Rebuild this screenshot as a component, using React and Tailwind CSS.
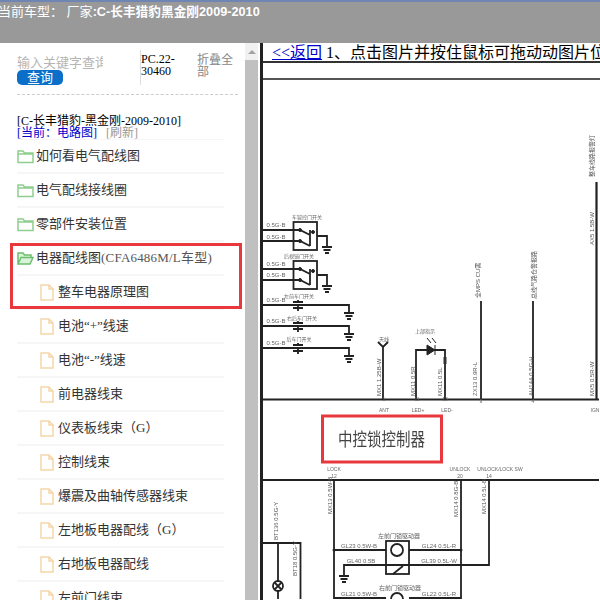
import React from 'react';

const folders = ['如何看电气配线图', '电气配线接线圈', '零部件安装位置'];
const files = ['电池“+”线速', '电池“-”线速', '前电器线束', '仪表板线束（G）', '控制线束', '爆震及曲轴传感器线束', '左地板电器配线（G）', '右地板电器配线', '左前门线束'];

const FolderIcon = ({ open }) => (
  <svg width="17" height="15" viewBox="0 0 17 15" fill="none" stroke="#8fce8f" strokeWidth="1.5" className="shrink-0">
    {open ? (
      <path d="M1 13V2h5l1.500 2H14v2.500M1 13l3-6.500h12L13 13z" fill="#d9f2d9" stroke="#6cbf6c" />
    ) : (
      <path d="M1 13.500V2h5l1.500 2H16v9.500zM1 5h15" />
    )}
  </svg>
);

const FileIcon = () => (
  <svg width="14" height="17" viewBox="0 0 14 17" fill="none" stroke="#f5d6a8" strokeWidth="1.5" className="shrink-0">
    <path d="M1 1h8l4 4v11H1zM9 1v4h4" />
  </svg>
);

const Row = ({ children }) => (
  <div className="flex h-[34px] w-[207px] items-center border-b-2 border-[#f6f6f6] text-[13px] whitespace-nowrap text-[#333]">
    {children}
  </div>
);

const Ground = ({ x, y }) => (
  <path
    d={`M${x} ${y}v5M${x - 5} ${y + 5}h10M${x - 3.5} ${y + 8}h7M${x - 2} ${y + 11}h4`}
    stroke="#222"
    strokeWidth="1.8"
    fill="none"
  />
);

const Switch = ({ y }) => (
  <g fill="none" stroke="#222">
    <rect x="294.500" y={y} width="23.500" height="28" strokeWidth="1.800" />
    <path d={`M264 ${y + 8}h37l10 5M264 ${y + 19}h37l10 5M311 ${y + 8}v16M318 ${y + 14}h10v6`} strokeWidth="1.800" />
    <circle cx="301" cy={y + 8} r="1.500" fill="#222" />
    <circle cx="301" cy={y + 19} r="1.500" fill="#222" />
    <circle cx="314" cy={y + 10} r="1.500" fill="#222" />
  </g>
);

const Cap = ({ y }) => (
  <path
    d={`M264 ${y}h86v3M294 ${y - 3}h10M294 ${y + 3}h10M299 ${y - 5}v3M299 ${y}v6`}
    stroke="#222"
    strokeWidth="1.800"
    fill="none"
  />
);

const Label = ({ x, y, children, size = 6, fill = '#666' }) => (
  <text x={x} y={y} fontSize={size} fill={fill} textAnchor="middle">{children}</text>
);

const VLabel = ({ x, y, children, size = 6 }) => (
  <text x={x} y={y} fontSize={size} fill="#555" transform={`rotate(-90 ${x} ${y})`}>{children}</text>
);

const Diagram = () => (
  <svg viewBox="264 81 336 519" className="block h-[519px] w-[336px] shrink-0 blur-[0.4px]" style={{ fontFamily: '"Liberation Sans", "Noto Sans CJK SC", sans-serif' }}>
    <Switch y={223} />
    <Switch y={262} />
    <Ground x={328} y={243} />
    <Ground x={328} y={282} />
    <Cap y={306} />
    <Cap y={327} />
    <Cap y={349} />
    <Ground x={350} y={309} />
    <Ground x={350} y={330} />
    <Ground x={350} y={352} />

    <g stroke="#222" strokeWidth="1.800" fill="none">
      <path d="M264 400.500H600M264 481H600" strokeWidth="2.200" />
      <path d="M384 348V400M379 343l5 5 5-5" />
      <path d="M417 400V351H446V400M482 302V400M534 302V400" />
      <path d="M597.500 183V400" strokeWidth="2.200" />
      <path d="M335 481V600M462 481V600M490 481V566H345V572" />
      <path d="M335 551H387M410 551H462M335 599H387M410 599H462" />
      <rect x="387" y="542" width="23" height="33" />
      <circle cx="398" cy="551" r="6" />
      <circle cx="398" cy="600" r="6" />
      <path d="M264 544H301.500V600M279 544V600" />
      <circle cx="279" cy="587" r="5" fill="#fff" />
      <path d="M275.500 583.500l7 7M282.500 583.500l-7 7" />
      <path d="M394 575l10-8M394 566h6" />
    </g>
    <path d="M428 346l8 5-8 5zM436 346v10" fill="#222" stroke="#222" />
    <path d="M428 339l4 5M433 339l4 5" stroke="#222" />
    <rect x="444.500" y="358" width="3" height="7" fill="#333" />
    <Ground x={345} y={572} />
    <circle cx="335" cy="551" r="1.500" fill="#222" />
    <circle cx="462" cy="551" r="1.500" fill="#222" />

    {[228, 240, 267, 278, 303, 324, 346].map((y) => (
      <Label key={y} x={277} y={y}>0.5G-B</Label>
    ))}
    <Label x={308} y={220} size={5}>车窗控门开关</Label>
    <Label x={300} y={259} size={5}>后视镜门开关</Label>
    <Label x={300} y={299} size={5}>左前车门开关</Label>
    <Label x={303} y={321} size={5}>右后车门开关</Label>
    <Label x={300} y={342} size={5}>后车门开关</Label>
    <Label x={385} y={342} size={5}>天线</Label>
    <Label x={426} y={334} size={5}>上部指示</Label>

    <VLabel x={382} y={397}>MX1 1.25B-W</VLabel>
    <VLabel x={416} y={397}>MX11 0.5R</VLabel>
    <VLabel x={443} y={397}>MX11 0.5L</VLabel>
    <VLabel x={478} y={397}>ZX13 0.9R-L</VLabel>
    <VLabel x={481} y={299}>全MPS CU需</VLabel>
    <VLabel x={534} y={397}>AH14A 0.5G-H</VLabel>
    <VLabel x={537} y={300}>总线气路仓警报路</VLabel>
    <VLabel x={595} y={397}>MX5 0.5R-W</VLabel>
    <VLabel x={595} y={246}>AX5 1.5B-W</VLabel>
    <VLabel x={595} y={178}>整车线路报警灯</VLabel>

    <Label x={385} y={402} size={5}>1</Label>
    <Label x={418} y={402} size={5}>11</Label>
    <Label x={446} y={402} size={5}>13</Label>
    <Label x={482} y={404} size={5}>9</Label>
    <Label x={534} y={404} size={5}>4</Label>
    <Label x={385} y={413} size={5}>ANT</Label>
    <Label x={419} y={413} size={5}>LED+</Label>
    <Label x={448} y={413} size={5}>LED-</Label>
    <Label x={596} y={413} size={5}>IGN</Label>

    <text x="339" y="0" fontSize="14.500" fill="#444" transform="translate(0 447) scale(1 1.250)">中控锁控制器</text>

    <Label x={335} y={472} size={5}>LOCK</Label>
    <Label x={335} y={479} size={5}>12</Label>
    <Label x={461} y={472} size={5}>UNLOCK</Label>
    <Label x={461} y={479} size={5}>20</Label>
    <Label x={501} y={472} size={5}>UNLOCK/LOCK SW</Label>
    <Label x={490} y={479} size={5}>14</Label>
    <VLabel x={333} y={515}>MX13 0.5W-B</VLabel>
    <VLabel x={459} y={518}>MX14 0.8G-B</VLabel>
    <VLabel x={487} y={515}>MX14 0.5L-B</VLabel>
    <VLabel x={279} y={541}>BT136 0.5G-Y</VLabel>
    <VLabel x={298} y={577}>BT18 0.5G-Y</VLabel>
    <Label x={400} y={539} size={6}>左前门锁驱动器</Label>
    <Label x={401} y={591} size={6}>右前门锁驱动器</Label>
    <Label x={360} y={549}>GL23 0.5W-B</Label>
    <Label x={440} y={549}>GL24 0.5L-R</Label>
    <Label x={362} y={564}>GL40 0.5B</Label>
    <Label x={440} y={564}>GL39 0.5L-W</Label>
    <Label x={360} y={597}>GL21 0.5W-B</Label>
    <Label x={440} y={597}>GL22 0.5L-R</Label>

    {/* 标注红框 */}
    <rect x="323.500" y="417" width="119" height="46" fill="none" stroke="#e8383d" strokeWidth="3" />
  </svg>
);

export default function App() {
  return (
    <div className="relative flex h-[600px] w-[600px] flex-col overflow-hidden bg-white" style={{ fontFamily: '"Liberation Serif", "Noto Sans CJK SC", serif' }}>
      {/* 顶部标题 */}
      <div className="h-[43px] shrink-0 border-t-2 border-[#6f86b4] bg-[#999999] pt-[2px] text-[13px] leading-[16px] whitespace-nowrap text-white" style={{ fontFamily: '"Liberation Sans", "Noto Sans CJK SC", sans-serif' }}>
        <div className="-ml-[2px]">当前车型： 厂家<span className="text-[12.7px] font-bold">:C-长丰猎豹黑金刚2009-2010</span></div>
      </div>

      <div className="flex min-h-0 flex-1">
        <aside className="w-[245px] shrink-0 overflow-hidden pt-[7px] pl-[17px]">
          <div className="flex h-[45px] w-[221px] border-b border-dashed border-[#cccccc]">
            <div className="w-[123px] shrink-0">
              <div className="h-[20px] w-[86px] overflow-hidden text-[13px] leading-[25px] whitespace-nowrap text-[#b5b5b5]">输入关键字查询</div>
              <button className="block h-[15px] w-[46px] rounded-[5px] bg-[#0b6fc9] text-center text-[13px] leading-[15px] text-white">查询</button>
            </div>
            <div className="h-[35px] w-[57px] shrink-0 border-l border-[#dddddd] pt-[3px] text-[12px] leading-[12px] font-normal text-black">PC.22-<br />30460</div>
            <div className="w-[36px] pt-[4px] text-[12px] leading-[12px] text-[#888]">折叠全部</div>
          </div>

          <div className="mt-[20px] text-[12px] leading-[12px] whitespace-nowrap text-black">[C-长丰猎豹-黑金刚-2009-2010]</div>
          <div className="flex h-[12px] gap-[9px] text-[12px] leading-[12px] whitespace-nowrap">
            <span className="text-[#0000cc]">[当前：电路图]</span>
            <span className="text-[#999]">[刷新]</span>
          </div>

          <div className="w-[207px] border-b border-[#f6f6f6]" />

          {folders.map((name) => (
            <Row key={name}>
              <FolderIcon />
              <span className="ml-[2px]">{name}</span>
            </Row>
          ))}
          <Row>
            <FolderIcon open />
            <span className="ml-[2px]">电器配线图<span className="tracking-[0.2px] text-[#555]">(CFA6486M/L车型)</span></span>
          </Row>
          <Row>
            <div className="ml-[23px] flex items-center gap-[4px]"><FileIcon /><span>整车电器原理图</span></div>
          </Row>
          {files.map((name) => (
            <Row key={name}>
              <div className="ml-[23px] flex items-center gap-[4px]"><FileIcon /><span>{name}</span></div>
            </Row>
          ))}
        </aside>

        {/* 滚动条 */}
        <div className="flex w-[13px] shrink-0 flex-col bg-[#f1f1f1]">
          <div className="flex h-[17px] items-center justify-center">
            <div className="h-0 w-0 border-x-[4px] border-b-[4px] border-x-transparent border-b-[#a3a3a3]" />
          </div>
          <div className="flex-1 bg-[#c0c0c0]" />
        </div>

        {/* 右侧图纸 */}
        <div className="ml-[2px] flex min-w-0 flex-1 flex-col overflow-hidden border-l-[3px] border-[#222]">
          <div className="h-[20px] shrink-0 border-b-2 border-[#333] pl-[9px] text-[16px] leading-[19px] whitespace-nowrap text-black">
            <a className="text-[#0000cc] underline">&lt;&lt;返回</a> 1、点击图片并按住鼠标可拖动动图片位置
          </div>
          <div className="h-[17px] shrink-0 border-b-2 border-[#555]" />
          <Diagram />
        </div>
      </div>

      {/* 标注红框 */}
      <div className="pointer-events-none absolute top-[243px] left-[10px] h-[66px] w-[232px] border-[3px] border-[#e8383d]" />
    </div>
  );
}
